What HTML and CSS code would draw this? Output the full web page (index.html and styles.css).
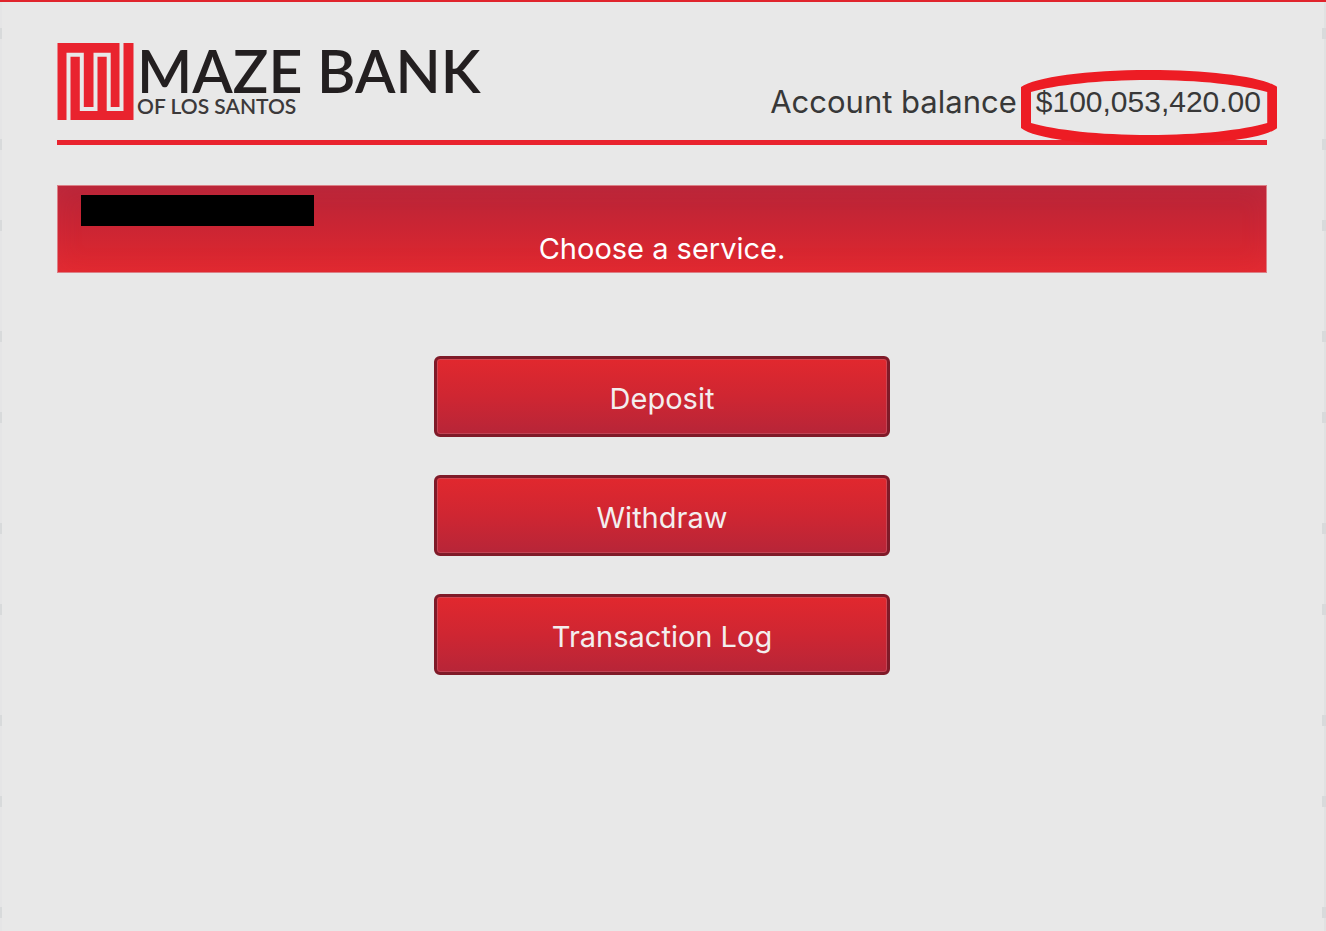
FILE: index.html
```html
<!DOCTYPE html>
<html lang="en">
<head>
  <meta charset="UTF-8" />
  <title>Maze Bank of Los Santos</title>
  <meta name="viewport" content="width=device-width, initial-scale=1.0" />
  <link rel="stylesheet" href="styles.css">
</head>
<body>
  <div class="page">
    <!-- Header -->
    <header class="header">
      <div class="logo">
        <svg class="logo-mark" viewBox="0 0 76 77" aria-hidden="true">
          <rect width="76" height="77" fill="#e9232e" />
          <path d="M11 77V11.7H24.3V66H38V11.7H51.2V66H64V0" fill="none" stroke="#e8e8e8" stroke-width="4" />
        </svg>
        <div class="logo-text">
          <span class="logo-name">MAZE BANK</span>
          <span class="logo-place">OF LOS SANTOS</span>
        </div>
      </div>
      <div class="balance">
        <span>Account balance</span>
        <span class="amount">
          $100,053,420.00
          <svg class="ring" viewBox="0 0 256 75" preserveAspectRatio="none" aria-hidden="true">
            <path fill="#ed1c24" fill-rule="evenodd" d="M0 17C14 7 66 0 128 0S242 7 256 17V58C242 69 190 75 128 75S14 69 0 58ZM10 22C34 15 78 10 128 10S222 15 246 22V53C222 60 178 65 128 65S34 60 10 53Z" />
          </svg>
        </span>
      </div>
    </header>

    <!-- Banner -->
    <div class="banner">
      <div class="account-name"></div>
      <h1 class="banner-title">Choose a service.</h1>
    </div>

    <!-- Services -->
    <main class="services">
      <button type="button" class="service">Deposit</button>
      <button type="button" class="service">Withdraw</button>
      <button type="button" class="service">Transaction Log</button>
    </main>
  </div>
</body>
</html>
```
FILE: styles.css
```css
* {
  box-sizing: border-box;
}

body {
  margin: 0;
  min-height: 100vh;
  font-family: Inter, "Liberation Sans", sans-serif;
  color: #383838;
  border-top: 2px solid #e0242c;
  background-color: #e8e8e8;
  /* faint ticks down both edges */
  background-image:
    linear-gradient(#d8dadb 11px, transparent 11px),
    linear-gradient(#d8dadb 11px, transparent 11px),
    linear-gradient(#d8dadb 11px, transparent 11px),
    linear-gradient(#d8dadb 11px, transparent 11px),
    linear-gradient(#e1e2e2, #e1e2e2),
    linear-gradient(#e5e5e6, #e5e5e6);
  background-size: 2px 192px, 2px 192px, 4px 192px, 4px 192px, 2px 192px, 2px 192px;
  background-position: left 28px, left 139px, right 28px, right 139px, right top, left top;
  background-repeat: repeat-y;
}

.page {
  padding: 41px 59px 40px 57px;
}

.header {
  display: flex;
  justify-content: space-between;
  align-items: flex-start;
  height: 102px;
  border-bottom: 5px solid #e9232e;
}

.logo {
  display: flex;
  gap: 3px;
}

.logo-mark {
  width: 77px;
  height: 77px;
}

.logo-text {
  display: flex;
  flex-direction: column;
  font-family: Lato, sans-serif;
  font-weight: 600;
  color: #231f20;
  white-space: nowrap;
}

.logo-name {
  font-size: 59px;
  line-height: 56px;
}

.logo-place {
  color: #3c393a;
  font-size: 21px;
  line-height: 14px;
}

.balance {
  display: flex;
  gap: 19px;
  padding: 39px 6px 0 0;
  font-size: 31px;
  line-height: 40px;
  white-space: nowrap;
}

.amount {
  position: relative;
  font-family: "Liberation Sans", sans-serif;
  font-size: 30px;
}

.ring {
  position: absolute;
  top: -12px;
  left: -15px;
  width: calc(100% + 31px);
  height: 75px;
}

.banner {
  height: 88px;
  margin-top: 40px;
  padding: 9px 23px;
  border: 1px solid #dc7f86;
  background: linear-gradient(#b72538, #cc2533 50%, #e1282e);
  box-shadow: inset 0 0 24px rgba(230, 60, 80, 0.2);
}

.account-name {
  width: 233px;
  height: 31px;
  background-color: #000;
}

.banner-title {
  margin: 4px 0 0;
  color: #fff;
  font-size: 29px;
  font-weight: 400;
  line-height: 38px;
  text-align: center;
}

.services {
  display: flex;
  flex-direction: column;
  align-items: center;
  gap: 38px;
  margin-top: 83px;
}

.service {
  width: 456px;
  max-width: 100%;
  height: 81px;
  padding: 4px 0 0;
  border: 3px solid #7f1a28;
  border-radius: 6px;
  background: linear-gradient(#e1282e, #cf2632 50%, #b72538);
  box-shadow: inset 0 0 0 1px rgba(200, 90, 105, 0.6);
  color: #f3eeee;
  font-family: inherit;
  font-size: 29px;
  cursor: pointer;
}

.service:hover {
  filter: brightness(1.08);
}
```
